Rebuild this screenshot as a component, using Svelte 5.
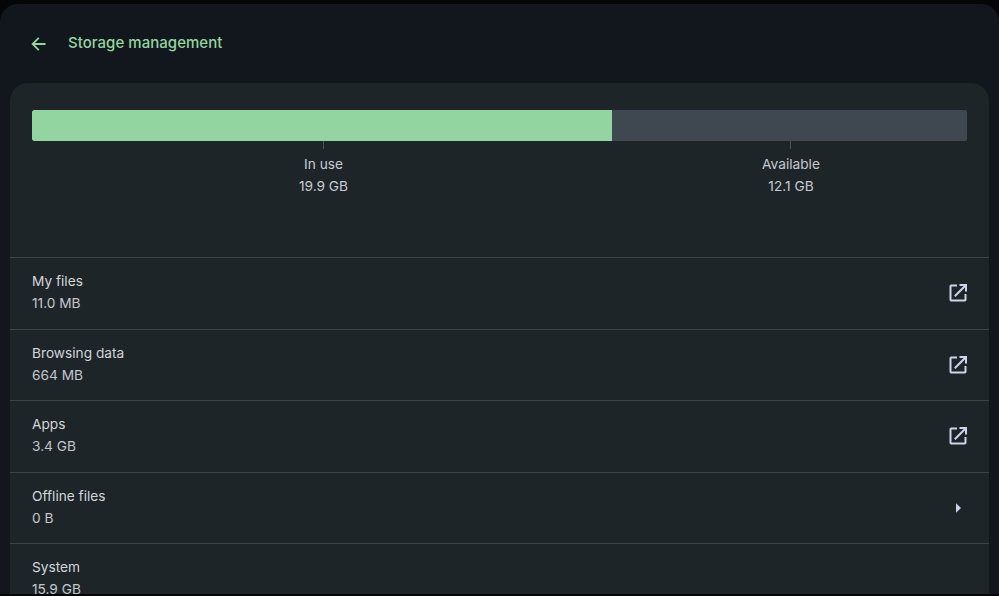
<script lang="ts">
	const rows = [
		{ name: 'My files', size: '11.0 MB', icon: 'open' },
		{ name: 'Browsing data', size: '664 MB', icon: 'open' },
		{ name: 'Apps', size: '3.4 GB', icon: 'open' },
		{ name: 'Offline files', size: '0 B', icon: 'arrow' },
		{ name: 'System', size: '15.9 GB', icon: '' }
	];
</script>

<div class="page">
	<div class="window">
		<header class="header">
			<svg class="back" width="20" height="20" viewBox="0 0 20 20" fill="none" stroke="currentColor" stroke-width="1.8">
				<path d="M16.5 10H4M9.8 3.8 3.6 10l6.2 6.2" />
			</svg>
			<h1 class="title">Storage management</h1>
		</header>

		<main class="card">
			<section class="usage">
				<div class="bar">
					<div class="used" style="width: 62.03%"></div>
				</div>
				<div class="legend">
					<div class="legend-item">
						<span class="tick"></span>
						<span class="legend-label">In use</span>
						<span class="legend-value">19.9 GB</span>
					</div>
					<div class="legend-item available">
						<span class="tick"></span>
						<span class="legend-label">Available</span>
						<span class="legend-value">12.1 GB</span>
					</div>
				</div>
			</section>

			{#each rows as row}
				<div class="row">
					<div class="row-text">
						<span class="row-name">{row.name}</span>
						<span class="row-size">{row.size}</span>
					</div>
					{#if row.icon === 'open'}
						<svg class="icon" width="20" height="20" viewBox="0 0 20 20" fill="none" stroke="currentColor" stroke-width="2">
							<path d="M9 2.5H3.2a.7.7 0 0 0-.7.7v13.6c0 .4.3.7.7.7h13.6c.4 0 .7-.3.7-.7V11" />
							<path d="M6.8 13.2 17 3M11.5 2h6.5v6.5" />
						</svg>
					{:else if row.icon === 'arrow'}
						<svg class="icon" width="20" height="20" viewBox="0 0 20 20" fill="currentColor">
							<path d="M8 5.2 13 10 8 14.8Z" />
						</svg>
					{/if}
				</div>
			{/each}
		</main>
	</div>
</div>

<style>
	:global(body) {
		margin: 0;
		background: #000;
	}

	.page {
		height: 596px;
		box-sizing: border-box;
		padding: 4px 0 2px;
		background: #050607;
		overflow: hidden;
		font-family: Inter, 'Liberation Sans', sans-serif;
	}

	.window {
		height: 100%;
		background: #12171d;
		border-radius: 18px 18px 0 0;
		overflow: hidden;
	}

	.header {
		display: flex;
		align-items: center;
		height: 79px;
		box-sizing: border-box;
		padding: 0 0 0 29px;
		color: #92d5a0;
	}

	.back {
		margin-right: 19px;
	}

	.title {
		margin: 0;
		font-size: 15px;
		font-weight: 500;
		letter-spacing: 0.03px;
		padding-bottom: 2px;
	}

	.card {
		margin: 0 10px;
		height: 560px;
		background: #1e2529;
		border-radius: 18px 18px 0 0;
		color: #c6cad0;
	}

	.usage {
		height: 174px;
		box-sizing: border-box;
		padding: 27px 22px 0;
	}

	.bar {
		height: 31px;
		background: #3f4851;
		border-radius: 2px;
		overflow: hidden;
	}

	.used {
		height: 100%;
		background: #92d5a0;
		border-radius: 2px 0 0 2px;
	}

	.legend {
		display: grid;
		grid-template-columns: 583px 352px;
	}

	.legend-item {
		display: flex;
		flex-direction: column;
		align-items: center;
		font-size: 13.7px;
		line-height: 22px;
	}

	.tick {
		width: 1px;
		height: 8px;
		margin-bottom: 4px;
		background: #4a5258;
	}

	.available .tick {
		margin-right: 2px;
	}

	.row {
		display: flex;
		align-items: center;
		justify-content: space-between;
		height: 71.5px;
		box-sizing: border-box;
		padding: 0 21px 0 22px;
		border-top: 1px solid #3c4448;
	}

	.row-text {
		display: flex;
		flex-direction: column;
		padding-bottom: 2px;
		font-size: 13.7px;
		line-height: 22px;
	}

	.row-name {
		color: #d2d5da;
	}

	.row-size {
		color: #c2c6cb;
	}

	.icon {
		color: #cfd2ec;
	}
</style>
